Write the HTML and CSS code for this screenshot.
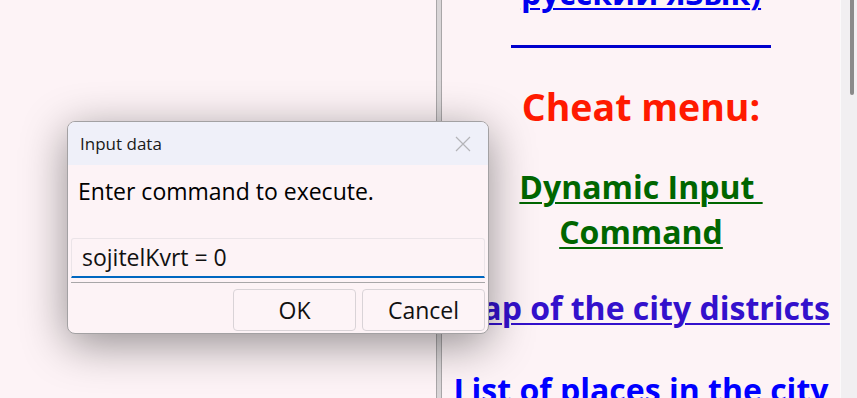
FILE: index.html
```html
<!DOCTYPE html>
<html lang="en">
<head>
    <meta charset="UTF-8">
    <title>Cheat menu</title>
    <link rel="stylesheet" href="styles.css">
</head>
<body>
    <div class="screen">
        <div class="pane-left"></div>
        <div class="divider"></div>
        <div class="pane-right">
            <p class="row lang"><a href="#">русский язык)</a></p>
            <div class="rule"></div>
            <h2 class="cheat">Cheat menu:</h2>
            <p class="row row-green"><a href="#" class="link-green">Dynamic Input&nbsp;<br>Command</a></p>
            <p class="row row-map"><a href="#" class="link-visited">Map of the city districts</a></p>
            <p class="row row-list"><a href="#" class="link-blue">List of places in the city</a></p>
        </div>
        <div class="scrollbar"><div class="thumb"></div></div>

        <!-- prompt dialog -->
        <div class="dialog">
            <div class="dialog-title">
                <span>Input data</span>
                <svg class="close" width="16" height="16" viewBox="0 0 16 16">
                    <path d="M1 1 L15 15 M15 1 L1 15" stroke="#b4b4b8" stroke-width="1.2" fill="none"/>
                </svg>
            </div>
            <div class="dialog-body">
                <p class="prompt">Enter command to execute.</p>
                <div class="field">sojitelKvrt = 0</div>
                <div class="sep"></div>
                <div class="buttons">
                    <button class="btn">OK</button>
                    <button class="btn">Cancel</button>
                </div>
            </div>
        </div>
    </div>
</body>
</html>
```

FILE: styles.css
```css
* {
    margin: 0;
    padding: 0;
    box-sizing: border-box;
}

body {
    background: #fdf3f6;
    font-family: "Open Sans", "Noto Sans", sans-serif;
    overflow: hidden;
}

.screen {
    position: relative;
    display: flex;
    width: 857px;
    height: 398px;
    overflow: hidden;
}

.pane-left {
    width: 436px;
    flex: none;
}

.divider {
    width: 6px;
    flex: none;
    background: #d9d5d7;
    border-left: 1px solid #a9a6a8;
    border-right: 1px solid #a9a6a8;
}

.pane-right {
    flex: 1;
    text-align: center;
    margin-top: -30px;
}

.scrollbar {
    width: 17px;
    flex: none;
    background: #f1eff1;
    border-left: 1px solid #fbf9fa;
    position: relative;
}

.thumb {
    position: absolute;
    left: 9px;
    top: 0;
    width: 4px;
    height: 95px;
    background: #8a8a8a;
    border-radius: 0 0 2px 2px;
}

.row {
    font-size: 32px;
    font-weight: 700;
    line-height: 45px;
    white-space: nowrap;
}

.row a {
    text-underline-offset: 3px;
    text-decoration-thickness: 2px;
}

.lang a {
    color: #0000ee;
}

.rule {
    width: 260px;
    height: 3px;
    margin: 30px auto 0;
    background: #0000cc;
}

.cheat {
    color: #ff1a00;
    font-size: 37.5px;
    line-height: 50px;
    margin-top: 34px;
}

.row-green {
    margin-top: 32px;
}

.row-map {
    margin-top: 31px;
}

.row-list {
    margin-top: 37px;
}

.link-green {
    color: #006600;
}

.link-visited {
    color: #3311cc;
}

.link-blue {
    color: #0000ff;
}

/* dialog */
.dialog {
    position: absolute;
    left: 67px;
    top: 121px;
    width: 422px;
    height: 213px;
    background: #fdf3f6;
    border: 1px solid #a3a1a3;
    border-radius: 8px;
    box-shadow: 0 10px 45px rgba(0, 0, 0, 0.42);
    overflow: hidden;
}

.dialog-title {
    height: 43px;
    background: #eff0f9;
    display: flex;
    align-items: center;
    justify-content: space-between;
    padding: 0 17px 0 12px;
    font-size: 17px;
    color: #1a1a1a;
}

.dialog-body {
    padding: 0 2px;
}

.prompt {
    font-size: 23px;
    color: #000;
    padding: 10px 0 0 8px;
    height: 73px;
}

.field {
    height: 40px;
    margin: 0 1px;
    background: #fdf3f6;
    border-top: 1px solid #ebe4e8;
    border-left: 1px solid #ebe4e8;
    border-right: 1px solid #ebe4e8;
    border-bottom: 2px solid #0067c0;
    border-radius: 3px 3px 0 0;
    font-size: 23px;
    line-height: 36px;
    padding-left: 10px;
    color: #111;
}

.sep {
    height: 1px;
    margin: 4px 1px 0;
    background: #a8a6a8;
}

.buttons {
    display: flex;
    justify-content: flex-end;
    gap: 6px;
    padding: 6px 1px 0 0;
}

.btn {
    width: 123px;
    height: 42px;
    background: #fdf4f7;
    border: 1px solid #d9d3d7;
    border-radius: 4px;
    font-family: inherit;
    font-size: 23px;
    color: #111;
}
```
